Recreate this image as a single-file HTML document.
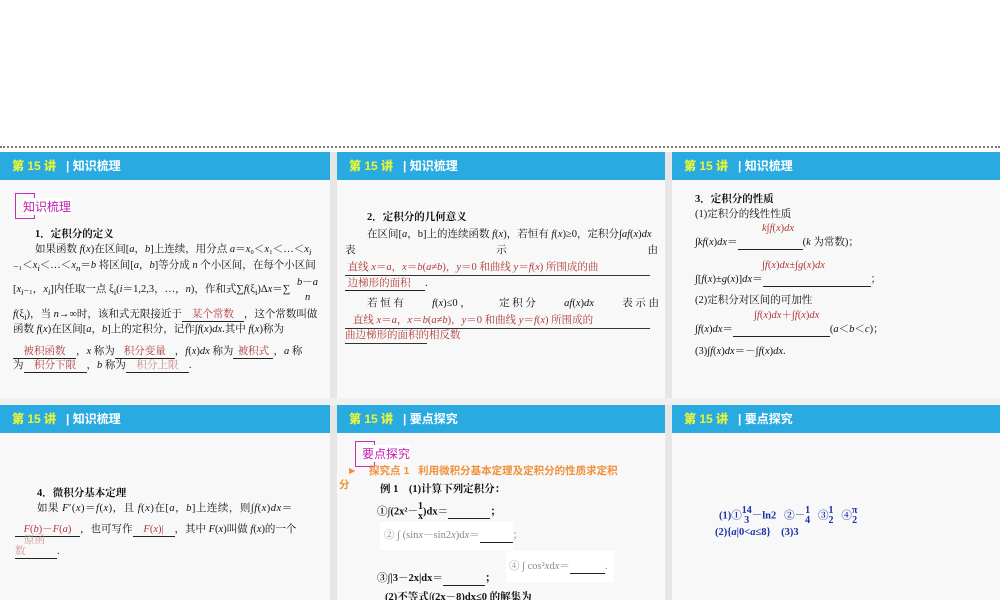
<!DOCTYPE html>
<html><head><meta charset="utf-8"><style>
*{margin:0;padding:0;box-sizing:border-box}
body{width:1000px;height:600px;overflow:hidden;background:#fff;position:relative;font-family:"Liberation Serif","Noto Serif CJK SC","Noto Sans CJK SC",serif;color:#111}
.dots{position:absolute;left:0;width:1000px;height:3px;border-top:2px dotted #777}
.panel{position:absolute;background:#f8f8f8;overflow:hidden}
.hd{position:absolute;left:0;right:0;top:0;height:28px;background:#29abe2;font-family:"Liberation Sans","Noto Sans CJK SC",sans-serif;font-weight:bold;font-size:12px;line-height:28px;padding-left:12px;color:#fff}
.hd b{color:#e6f53a;margin-right:10px}
.gap{position:absolute;background:#e6e6e6}
.t{position:absolute;font-size:10.5px;line-height:14px;white-space:nowrap}
.r{color:#b03a3a}
.u{display:inline-block;border-bottom:1px solid #222;text-align:center;line-height:12px}
.box{position:absolute;border:1px solid #c030b0;width:20px;height:26px}
.lbl{position:absolute;color:#c020b0;font-family:"Liberation Sans","Noto Sans CJK SC",sans-serif;font-size:12px;background:#fff}
.bl{color:#1c2fa8;font-weight:bold}
.fr{display:inline-block;vertical-align:middle;text-align:center;line-height:10px;font-size:10px}
</style></head><body>
<div class="dots" style="top:146px"></div>
<div class="gap" style="left:330px;top:152px;width:7px;height:448px"></div>
<div class="gap" style="left:665px;top:152px;width:7px;height:448px"></div>
<div class="gap" style="left:0;top:398px;width:1000px;height:7px;background:#f0f0f0"></div>

<div class="panel" style="left:0;top:152px;width:330px;height:246px">
<div class="hd"><b>第 15 讲</b>| 知识梳理</div>
<div class="box" style="left:15px;top:41px"></div>
<div class="lbl" style="left:23px;top:46px">知识梳理</div>
<div class="t" style="left:35px;top:76px;font-weight:bold">1．定积分的定义</div>
<div class="t" style="left:35px;top:91px">如果函数 <i>f</i>(<i>x</i>)在区间[<i>a</i>，<i>b</i>]上连续，用分点 <i>a</i>＝<i>x</i>₀＜<i>x</i>₁＜…＜<i>x<sub>i</sub></i></div>
<div class="t" style="left:13px;top:107px">₋₁＜<i>x<sub>i</sub></i>＜…＜<i>x<sub>n</sub></i>＝<i>b</i> 将区间[<i>a</i>，<i>b</i>]等分成 <i>n</i> 个小区间，在每个小区间</div>
<div class="t" style="left:13px;top:131px">[<i>x<sub>i</sub></i>₋₁，<i>x<sub>i</sub></i>]内任取一点 ξ<sub>i</sub>(<i>i</i>＝1,2,3，…，<i>n</i>)，作和式∑<i>f</i>(ξ<sub>i</sub>)Δ<i>x</i>＝∑ </div>
<div class="t" style="left:297px;top:124px"><i>b</i>－<i>a</i></div>
<div class="t" style="left:305px;top:139px"><i>n</i></div>
<div class="t" style="left:13px;top:156px"><i>f</i>(ξ<sub>i</sub>)，当 <i>n</i>→∞时，该和式无限接近于<span class="u r" style="width:62px">某个常数</span>，这个常数叫做</div>
<div class="t" style="left:13px;top:171px">函数 <i>f</i>(<i>x</i>)在区间[<i>a</i>，<i>b</i>]上的定积分，记作∫<i>f</i>(<i>x</i>)<i>dx</i>.其中 <i>f</i>(<i>x</i>)称为</div>
<div class="t" style="left:13px;top:193px"><span class="u r" style="width:63px">被积函数</span>，<i>x</i> 称为<span class="u r" style="width:60px">积分变量</span>，<i>f</i>(<i>x</i>)<i>dx</i> 称为<span class="u r" style="width:40px">被积式</span>，<i>a</i> 称</div>
<div class="t" style="left:13px;top:207px">为<span class="u r" style="width:63px">积分下限</span>，<i>b</i> 称为<span class="u r" style="width:63px;color:#c88">积分上限</span>.</div>
</div>

<div class="panel" style="left:337px;top:152px;width:328px;height:246px">
<div class="hd"><b>第 15 讲</b>| 知识梳理</div>
<div class="t" style="left:30px;top:59px;font-weight:bold">2．定积分的几何意义</div>
<div class="t" style="left:30px;top:76px">在区间[<i>a</i>，b]上的连续函数 <i>f</i>(<i>x</i>)，若恒有 <i>f</i>(<i>x</i>)≥0，定积分∫<i>af</i>(<i>x</i>)<i>dx</i></div>
<div class="t" style="left:8px;top:92px;width:313px;display:flex;justify-content:space-between"><span>表</span><span>示</span><span>由</span></div>
<div class="t r" style="left:8px;top:109px;border-bottom:1px solid #333;width:305px">&nbsp;直线 <i>x</i>＝<i>a</i>，<i>x</i>＝<i>b</i>(<i>a</i>≠<i>b</i>)，<i>y</i>＝0 和曲线 <i>y</i>＝<i>f</i>(<i>x</i>) 所围成的曲</div>
<div class="t" style="left:8px;top:125px"><span class="u r" style="width:80px;text-align:left">&nbsp;边梯形的面积</span>.</div>
<div class="t" style="left:30px;top:145px;width:292px;display:flex;justify-content:space-between"><span>若 恒 有</span><span><i>f</i>(<i>x</i>)≤0 ，</span><span>定 积 分</span><span><i>af</i>(<i>x</i>)<i>dx</i></span><span>表 示 由</span></div>
<div class="t r" style="left:8px;top:162px;border-bottom:1px solid #333;width:305px">&nbsp;&nbsp;&nbsp;直线 <i>x</i>＝<i>a</i>，<i>x</i>＝<i>b</i>(<i>a</i>≠<i>b</i>)，<i>y</i>＝0 和曲线 <i>y</i>＝<i>f</i>(<i>x</i>) 所围成的</div>
<div class="t r" style="left:8px;top:177px;border-bottom:1px solid #333;width:82px">曲边梯形的面积的相反数</div>
</div>

<div class="panel" style="left:672px;top:152px;width:328px;height:246px">
<div class="hd"><b>第 15 讲</b>| 知识梳理</div>
<div class="t" style="left:23px;top:41px;font-weight:bold">3．定积分的性质</div>
<div class="t" style="left:23px;top:56px">(1)定积分的线性性质</div>
<div class="t r" style="left:90px;top:70px"><i>k</i>∫<i>f</i>(<i>x</i>)<i>dx</i></div>
<div class="t" style="left:23px;top:84px">∫<i>kf</i>(<i>x</i>)<i>dx</i>＝<span class="u" style="width:65px">&nbsp;</span>(<i>k</i> 为常数)；</div>
<div class="t r" style="left:90px;top:107px">∫<i>f</i>(<i>x</i>)<i>dx</i>±∫<i>g</i>(<i>x</i>)<i>dx</i></div>
<div class="t" style="left:23px;top:121px">∫[<i>f</i>(<i>x</i>)±<i>g</i>(<i>x</i>)]<i>dx</i>＝<span class="u" style="width:108px">&nbsp;</span>；</div>
<div class="t" style="left:23px;top:142px">(2)定积分对区间的可加性</div>
<div class="t r" style="left:82px;top:157px">∫<i>f</i>(<i>x</i>)<i>dx</i>＋∫<i>f</i>(<i>x</i>)<i>dx</i></div>
<div class="t" style="left:23px;top:171px">∫<i>f</i>(<i>x</i>)<i>dx</i>＝<span class="u" style="width:97px">&nbsp;</span>(<i>a</i>＜<i>b</i>＜<i>c</i>)；</div>
<div class="t" style="left:23px;top:193px">(3)∫<i>f</i>(<i>x</i>)<i>dx</i>＝－∫<i>f</i>(<i>x</i>)<i>dx</i>.</div>
</div>

<div class="panel" style="left:0;top:405px;width:330px;height:195px">
<div class="hd"><b>第 15 讲</b>| 知识梳理</div>
<div class="t" style="left:37px;top:82px;font-weight:bold">4．微积分基本定理</div>
<div class="t" style="left:37px;top:97px;letter-spacing:0.5px">如果 <i>F</i>′(<i>x</i>)＝<i>f</i>(<i>x</i>)，且 <i>f</i>(<i>x</i>)在[<i>a</i>，<i>b</i>]上连续，则∫<i>f</i>(<i>x</i>)<i>dx</i>＝</div>
<div class="t" style="left:15px;top:118px"><span class="u r" style="width:65px"><i>F</i>(<i>b</i>)－<i>F</i>(<i>a</i>)</span>，也可写作<span class="u r" style="width:42px"><i>F</i>(<i>x</i>)|</span>，其中 <i>F</i>(<i>x</i>)叫做 <i>f</i>(<i>x</i>)的一个</div>
<div class="t r" style="left:24px;top:129px;color:#c99">原函</div>
<div class="t" style="left:15px;top:140px"><span class="u r" style="width:42px;text-align:left;color:#c99">数</span>.</div>
</div>

<div class="panel" style="left:337px;top:405px;width:328px;height:195px">
<div class="hd"><b>第 15 讲</b>| 要点探究</div>
<div class="box" style="left:18px;top:36px;height:26px"></div>
<div class="lbl" style="left:25px;top:40px">要点探究</div>
<div class="t" style="left:10px;top:59px;color:#f0903a;font-family:'Liberation Sans','Noto Sans CJK SC',sans-serif;font-weight:bold">►&nbsp;&nbsp;&nbsp;&nbsp;探究点 1&nbsp;&nbsp;&nbsp;利用微积分基本定理及定积分的性质求定积</div>
<div class="t" style="left:2px;top:73px;color:#f0903a;font-weight:bold;font-family:'Liberation Sans','Noto Sans CJK SC',sans-serif">分</div>
<div class="t" style="left:43px;top:78px;font-weight:bold">例 1　(1)计算下列定积分：</div>
<div class="t" style="left:40px;top:97px;font-weight:bold">①∫(2x²－<span class="fr">1<br>x</span>)dx＝<span class="u" style="width:42px">&nbsp;</span>；</div>
<div style="position:absolute;left:43px;top:117px;width:133px;height:28px;background:#fff"></div>
<div class="t" style="left:47px;top:124px;color:#888">② ∫ (sin<i>x</i>－sin2<i>x</i>)d<i>x</i>＝<span class="u" style="width:33px">&nbsp;</span>；</div>
<div style="position:absolute;left:169px;top:146px;width:108px;height:31px;background:#fff"></div>
<div class="t" style="left:172px;top:155px;color:#888">④ ∫ cos²<i>x</i>d<i>x</i>＝<span class="u" style="width:35px">&nbsp;</span>.</div>
<div class="t" style="left:40px;top:167px;font-weight:bold">③∫|3－2x|dx＝<span class="u" style="width:42px">&nbsp;</span>；</div>
<div class="t" style="left:48px;top:186px;font-weight:bold">(2)不等式∫(2x－8)dx≤0 的解集为</div>
</div>

<div class="panel" style="left:672px;top:405px;width:328px;height:195px">
<div class="hd"><b>第 15 讲</b>| 要点探究</div>
<div class="t bl" style="left:47px;top:101px;line-height:20px">(1)①<span class="fr">14<br>3</span>－ln2&nbsp;&nbsp;&nbsp;②－<span class="fr">1<br>4</span>&nbsp;&nbsp;&nbsp;③<span class="fr">1<br>2</span>&nbsp;&nbsp;&nbsp;④<span class="fr">π<br>2</span></div>
<div class="t bl" style="left:43px;top:121px">(2){<i>a</i>|0&lt;<i>a</i>≤8}&nbsp;&nbsp;&nbsp;&nbsp;(3)3</div>
</div>
</body></html>
